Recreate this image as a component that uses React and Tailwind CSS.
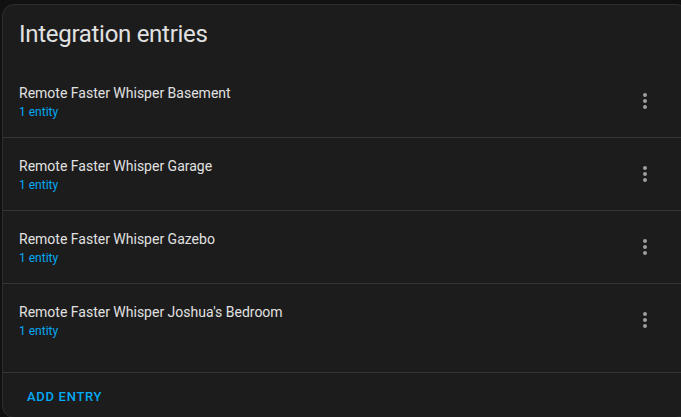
const entries = [
  'Remote Faster Whisper Basement',
  'Remote Faster Whisper Garage',
  'Remote Faster Whisper Gazebo',
  "Remote Faster Whisper Joshua's Bedroom",
];

const DotsVertical = () => (
  <svg width="24" height="24" viewBox="0 0 24 24" fill="currentColor">
    <path d="M12,16A2,2 0 0,1 14,18A2,2 0 0,1 12,20A2,2 0 0,1 10,18A2,2 0 0,1 12,16M12,10A2,2 0 0,1 14,12A2,2 0 0,1 12,14A2,2 0 0,1 10,12A2,2 0 0,1 12,10M12,4A2,2 0 0,1 14,6A2,2 0 0,1 12,8A2,2 0 0,1 10,6A2,2 0 0,1 12,4Z" />
  </svg>
);

export default function App() {
  return (
    <div
      className="h-[417px] w-[681px] overflow-hidden bg-[#111111] pl-[2px] pt-[4px]"
      style={{ fontFamily: 'Roboto, "Noto Sans", sans-serif' }}
    >
      <div className="w-[686px] h-[414px] rounded-xl border border-[#2e2e2e] bg-[#1c1c1c] text-[#e1e1e1]">
        <h1 className="px-4 pt-[13px] pb-[15px] text-[24px] leading-8 font-normal tracking-[-0.012em]">
          Integration entries
        </h1>
        <div className="pb-4">
          {entries.map((name, i) => (
            <div
              key={name}
              className={`flex items-center pl-4 pr-[30px] ${i < entries.length - 1 ? 'h-[73px] border-b border-[#343434]' : 'h-[72px]'}`}
            >
              <div className="flex-1 pt-px">
                <div className="text-sm leading-5 text-[#e1e1e1]">{name}</div>
                <div className="text-xs leading-[18px] text-[#03a9f4]">1 entity</div>
              </div>
              <div className="text-[#9e9e9e]">
                <DotsVertical />
              </div>
            </div>
          ))}
        </div>
        <div className="border-t border-[#343434] px-4 pt-[6px]">
          <button className="h-9 px-2 text-[13px] font-medium tracking-[0.7px] text-[#03a9f4]">
            ADD ENTRY
          </button>
        </div>
      </div>
    </div>
  );
}
